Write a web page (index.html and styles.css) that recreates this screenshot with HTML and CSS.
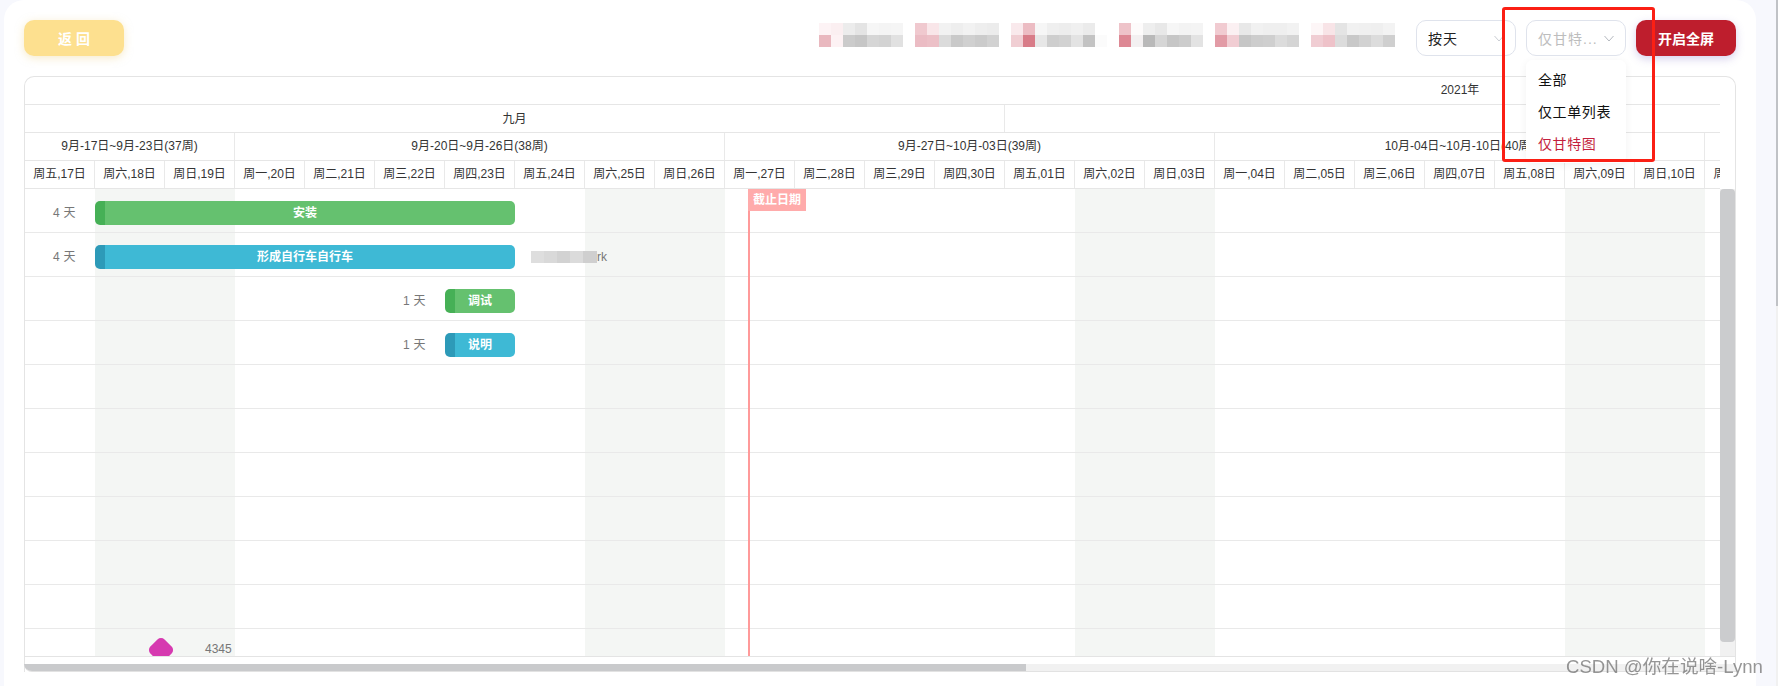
FILE: index.html
```html
<!DOCTYPE html>
<html lang="zh-CN">
<head>
<meta charset="utf-8">
<title>甘特图</title>
<link rel="stylesheet" href="styles.css">
</head>
<body>
<main class="card">
  <header class="toolbar">
    <button class="btn btn-back">返 回</button>
    <svg class="mosaic" width="576" height="24" viewBox="0 0 48 2" preserveAspectRatio="none" shape-rendering="crispEdges" aria-hidden="true">
      <g>
        <rect x="0" y="0" width="1" height="1" fill="#fdf3f5"/><rect x="1" y="0" width="1" height="1" fill="#fbeff1"/><rect x="2" y="0" width="1" height="1" fill="#ececec"/><rect x="3" y="0" width="1" height="1" fill="#e4e4e4"/><rect x="4" y="0" width="1" height="1" fill="#f6f6f6"/><rect x="5" y="0" width="1" height="1" fill="#f4f4f4"/><rect x="6" y="0" width="1" height="1" fill="#f5f5f5"/>
        <rect x="0" y="1" width="1" height="1" fill="#e9b8bf"/><rect x="1" y="1" width="1" height="1" fill="#fdf2f4"/><rect x="2" y="1" width="1" height="1" fill="#cbcbcb"/><rect x="3" y="1" width="1" height="1" fill="#c6c6c6"/><rect x="4" y="1" width="1" height="1" fill="#d6d6d6"/><rect x="5" y="1" width="1" height="1" fill="#d3d3d3"/><rect x="6" y="1" width="1" height="1" fill="#e1e1e1"/>
      </g>
      <g>
        <rect x="8" y="0" width="1" height="1" fill="#f0c9cf"/><rect x="9" y="0" width="1" height="1" fill="#f9e6e9"/><rect x="10" y="0" width="1" height="1" fill="#f2f2f2"/><rect x="11" y="0" width="1" height="1" fill="#eeeeee"/><rect x="12" y="0" width="1" height="1" fill="#f2f2f2"/><rect x="13" y="0" width="1" height="1" fill="#eeeeee"/><rect x="14" y="0" width="1" height="1" fill="#ececec"/>
        <rect x="8" y="1" width="1" height="1" fill="#ebbcc4"/><rect x="9" y="1" width="1" height="1" fill="#ecc0c7"/><rect x="10" y="1" width="1" height="1" fill="#dbdbdb"/><rect x="11" y="1" width="1" height="1" fill="#c9c9c9"/><rect x="12" y="1" width="1" height="1" fill="#d0d0d0"/><rect x="13" y="1" width="1" height="1" fill="#cbcbcb"/><rect x="14" y="1" width="1" height="1" fill="#d2d2d2"/>
      </g>
      <g>
        <rect x="16" y="0" width="1" height="1" fill="#f9e9ec"/><rect x="17" y="0" width="1" height="1" fill="#ecbcc3"/><rect x="18" y="0" width="1" height="1" fill="#f6f6f6"/><rect x="19" y="0" width="1" height="1" fill="#efefef"/><rect x="20" y="0" width="1" height="1" fill="#ededed"/><rect x="21" y="0" width="1" height="1" fill="#f0f0f0"/><rect x="22" y="0" width="1" height="1" fill="#ebebeb"/>
        <rect x="16" y="1" width="1" height="1" fill="#f0ced3"/><rect x="17" y="1" width="1" height="1" fill="#d87c88"/><rect x="18" y="1" width="1" height="1" fill="#e7e7e7"/><rect x="19" y="1" width="1" height="1" fill="#cecece"/><rect x="20" y="1" width="1" height="1" fill="#d2d2d2"/><rect x="21" y="1" width="1" height="1" fill="#e3e3e3"/><rect x="22" y="1" width="1" height="1" fill="#c3c3c3"/><rect x="23" y="1" width="1" height="1" fill="#fbfbfb"/>
      </g>
      <g>
        <rect x="25" y="0" width="1" height="1" fill="#eec3c9"/><rect x="26" y="0" width="1" height="1" fill="#fdfbfb"/><rect x="27" y="0" width="1" height="1" fill="#eeeeee"/><rect x="28" y="0" width="1" height="1" fill="#e8e8e8"/><rect x="29" y="0" width="1" height="1" fill="#f6f6f6"/><rect x="30" y="0" width="1" height="1" fill="#f3f3f3"/><rect x="31" y="0" width="1" height="1" fill="#f4f4f4"/>
        <rect x="25" y="1" width="1" height="1" fill="#dd8894"/><rect x="26" y="1" width="1" height="1" fill="#f3f0f1"/><rect x="27" y="1" width="1" height="1" fill="#b9b9b9"/><rect x="28" y="1" width="1" height="1" fill="#d6d6d6"/><rect x="29" y="1" width="1" height="1" fill="#c6c6c6"/><rect x="30" y="1" width="1" height="1" fill="#cccccc"/><rect x="31" y="1" width="1" height="1" fill="#e3e3e3"/>
      </g>
      <g>
        <rect x="33" y="0" width="1" height="1" fill="#f1cbd1"/><rect x="34" y="0" width="1" height="1" fill="#fbf0f2"/><rect x="35" y="0" width="1" height="1" fill="#e8e8e8"/><rect x="36" y="0" width="1" height="1" fill="#f1f1f1"/><rect x="37" y="0" width="1" height="1" fill="#efefef"/><rect x="38" y="0" width="1" height="1" fill="#efefef"/><rect x="39" y="0" width="1" height="1" fill="#f2f2f2"/>
        <rect x="33" y="1" width="1" height="1" fill="#e29ba6"/><rect x="34" y="1" width="1" height="1" fill="#f1cdd3"/><rect x="35" y="1" width="1" height="1" fill="#c6c6c6"/><rect x="36" y="1" width="1" height="1" fill="#cdcdcd"/><rect x="37" y="1" width="1" height="1" fill="#cfcfcf"/><rect x="38" y="1" width="1" height="1" fill="#dcdcdc"/><rect x="39" y="1" width="1" height="1" fill="#d5d5d5"/>
      </g>
      <g>
        <rect x="41" y="0" width="1" height="1" fill="#fdf6f7"/><rect x="42" y="0" width="1" height="1" fill="#f8e4e7"/><rect x="43" y="0" width="1" height="1" fill="#e4e4e4"/><rect x="44" y="0" width="1" height="1" fill="#f1f1f1"/><rect x="45" y="0" width="1" height="1" fill="#f0f0f0"/><rect x="46" y="0" width="1" height="1" fill="#efefef"/><rect x="47" y="0" width="1" height="1" fill="#f3f3f3"/>
        <rect x="41" y="1" width="1" height="1" fill="#f0cdd3"/><rect x="42" y="1" width="1" height="1" fill="#eec2c9"/><rect x="43" y="1" width="1" height="1" fill="#dcdcdc"/><rect x="44" y="1" width="1" height="1" fill="#c8c8c8"/><rect x="45" y="1" width="1" height="1" fill="#d2d2d2"/><rect x="46" y="1" width="1" height="1" fill="#dcdcdc"/><rect x="47" y="1" width="1" height="1" fill="#cfcfcf"/>
      </g>
    </svg>
    <div class="selects">
      <div class="select">
        <span class="select-value">按天</span>
        <svg class="chevron chevron-faint" width="10" height="7" viewBox="0 0 10 7" aria-hidden="true"><path d="M.5 1 5 6 9.500 1" fill="none" stroke="currentColor" stroke-width="1"/></svg>
      </div>
      <div class="select select-open">
        <span class="select-value select-placeholder">仅甘特...</span>
        <svg class="chevron" width="10" height="7" viewBox="0 0 10 7" aria-hidden="true"><path d="M.5 1 5 6 9.500 1" fill="none" stroke="currentColor" stroke-width="1"/></svg>
        <ul class="dropdown">
          <li>全部</li>
          <li>仅工单列表</li>
          <li class="active">仅甘特图</li>
        </ul>
      </div>
      <button class="btn btn-full">开启全屏</button>
    </div>
  </header>

  <section class="gantt">
    <div class="gantt-main">
      <div class="viewport">
        <div class="timeline">
          <div class="hrow"><div class="cell c41">2021年</div></div>
          <div class="hrow"><div class="cell c14 month">九月</div><div class="cell c27"></div></div>
          <div class="hrow">
            <div class="cell c3">9月-17日~9月-23日(37周)</div>
            <div class="cell c7">9月-20日~9月-26日(38周)</div>
            <div class="cell c7">9月-27日~10月-03日(39周)</div>
            <div class="cell c7">10月-04日~10月-10日(40周)</div>
            <div class="cell c7">10月-11日~10月-17日(41周)</div>
          </div>
          <div class="hrow">
            <div class="cell c1">周五,17日</div><div class="cell c1">周六,18日</div><div class="cell c1">周日,19日</div>
            <div class="cell c1">周一,20日</div><div class="cell c1">周二,21日</div><div class="cell c1">周三,22日</div><div class="cell c1">周四,23日</div><div class="cell c1">周五,24日</div><div class="cell c1">周六,25日</div><div class="cell c1">周日,26日</div>
            <div class="cell c1">周一,27日</div><div class="cell c1">周二,28日</div><div class="cell c1">周三,29日</div><div class="cell c1">周四,30日</div><div class="cell c1">周五,01日</div><div class="cell c1">周六,02日</div><div class="cell c1">周日,03日</div>
            <div class="cell c1">周一,04日</div><div class="cell c1">周二,05日</div><div class="cell c1">周三,06日</div><div class="cell c1">周四,07日</div><div class="cell c1">周五,08日</div><div class="cell c1">周六,09日</div><div class="cell c1">周日,10日</div>
            <div class="cell c1">周一,11日</div>
          </div>
          <div class="body">
            <div class="row">
              <span class="days" style="left:28px">4 天</span>
              <div class="bar bar-green" style="left:70px;width:420px"><span>安装</span></div>
            </div>
            <div class="row">
              <span class="days" style="left:28px">4 天</span>
              <div class="bar bar-blue" style="left:70px;width:420px"><span>形成自行车自行车</span></div>
              <div class="owner"><i class="blur b1"></i><i class="blur b2"></i><i class="blur b3"></i><i class="blur b4"></i><i class="blur b5"></i><span>rk</span></div>
            </div>
            <div class="row">
              <span class="days" style="left:378px">1 天</span>
              <div class="bar bar-green" style="left:420px;width:70px"><span>调试</span></div>
            </div>
            <div class="row">
              <span class="days" style="left:378px">1 天</span>
              <div class="bar bar-blue" style="left:420px;width:70px"><span>说明</span></div>
            </div>
            <div class="row"></div>
            <div class="row"></div>
            <div class="row"></div>
            <div class="row"></div>
            <div class="row"></div>
            <div class="row"></div>
            <div class="row">
              <i class="milestone"></i>
              <span class="milestone-label">4345</span>
            </div>
            <div class="deadline"><span class="deadline-label">截止日期</span></div>
          </div>
        </div>
      </div>
      <div class="vbar"><div class="vtrack"><div class="vthumb"></div></div></div>
    </div>
    <div class="hbar"><div class="hthumb"></div></div>
  </section>

  <div class="annotation"></div>
</main>
<div class="page-scroll"><div class="page-thumb"></div></div>
<span class="watermark">CSDN @你在说啥-Lynn</span>
</body>
</html>
```
FILE: styles.css
```css
* { box-sizing: border-box; }
html, body { height: 100%; }
body {
  margin: 0;
  height: 686px;
  overflow: hidden;
  display: flex;
  background: #f7f8fd;
  font-family: "Liberation Sans", "Noto Sans CJK SC", sans-serif;
  font-size: 12px;
  color: #333;
}
.card {
  position: relative;
  width: 1752px;
  margin-left: 4px;
  margin-right: 20px;
  padding: 20px 20px 0;
  background: #fff;
  border-radius: 20px 20px 0 0;
  flex: none;
}
.toolbar {
  display: flex;
  align-items: flex-start;
  height: 36px;
  margin-bottom: 20px;
}
.btn {
  height: 36px;
  width: 100px;
  border: 0;
  border-radius: 10px;
  color: #fff;
  font-family: inherit;
  padding: 0;
}
.btn-back {
  background: #fde08f;
  font-size: 14px;
  font-weight: 700;
  box-shadow: 0 2px 8px rgba(240, 215, 150, .5);
}
.btn-full {
  background: #be1e2d;
  font-size: 14px;
  font-weight: 700;
  box-shadow: 0 3px 8px rgba(110, 90, 190, .28);
}
.mosaic { margin-left: 695px; margin-top: 3px; flex: none; }
.selects { display: flex; gap: 10px; margin-left: auto; }
.select {
  position: relative;
  width: 100px;
  height: 36px;
  border: 1px solid #dfe3ec;
  border-radius: 10px;
  display: flex;
  align-items: center;
  justify-content: space-between;
  padding: 0 11px 0 11px;
  font-size: 14px;
  letter-spacing: 1px;
  color: #222;
}
.select-placeholder { color: #bdbdbd; }
.chevron { color: #b4b8bf; flex: none; }
.chevron-faint { color: #c9ccd2; }
.dropdown {
  position: absolute;
  z-index: 5;
  left: -1px;
  top: 39px;
  width: 100px;
  height: 103px;
  margin: 0;
  padding: 4px 0 0;
  list-style: none;
  background: #fff;
  border-radius: 6px;
  box-shadow: 0 2px 8px rgba(0, 0, 0, .06);
  letter-spacing: .6px;
}
.dropdown li {
  height: 32px;
  line-height: 32px;
  padding-left: 12px;
  color: #111;
  white-space: nowrap;
}
.dropdown .active { color: #c41f3e; }

.gantt {
  height: 596px;
  border-left: 1px solid #e4e4e4;
  border-top: 1px solid #e4e4e4;
  border-right: 1px solid #e4e4e4;
  border-radius: 10px 10px 0 0;
  position: relative;
}
.gantt-main {
  display: flex;
  height: 580px;
  border-bottom: 1px solid #e4e4e4;
  margin-bottom: 7px;
}
.viewport {
  width: 1695px;
  height: 579px;
  overflow: hidden;
  border-top-left-radius: 10px;
  flex: none;
}
.timeline { width: 2870px; }
.hrow {
  display: flex;
  height: 28px;
  border-bottom: 1px solid #e6e6e6;
}
.cell {
  flex: none;
  height: 27px;
  line-height: 27px;
  text-align: center;
  border-right: 1px solid #e9e9e9;
  color: #333;
  font-size: 12px;
  white-space: nowrap;
  overflow: hidden;
}
.month { line-height: 29px; }
.c1 { width: 70px; }
.c3 { width: 210px; }
.c7 { width: 490px; }
.c14 { width: 980px; }
.c27 { width: 1890px; }
.c41 { width: 2870px; border-right: 0; }

.body {
  position: relative;
  background: linear-gradient(to right, transparent 70px, #f4f6f4 70px, #f4f6f4 210px, transparent 210px) 0 0 / 490px 100% repeat-x;
}
.row {
  position: relative;
  height: 44px;
  border-bottom: 1px solid #e9e9e9;
}
.days {
  position: absolute;
  top: 12px;
  line-height: 24px;
  color: #777;
  font-size: 12px;
  letter-spacing: .3px;
  white-space: pre;
}
.bar {
  position: absolute;
  top: 12px;
  height: 24px;
  border-radius: 5px;
  overflow: hidden;
  color: #fff;
  font-size: 12px;
  font-weight: 700;
  line-height: 24px;
  text-align: center;
  padding-left: 0;
}
.bar-green { background: linear-gradient(to right, #46b056 10px, #65c16f 10px); }
.bar-blue { background: linear-gradient(to right, #2d9ab8 10px, #3eb9d5 10px); }
.owner {
  position: absolute;
  left: 506px;
  top: 18px;
  height: 12px;
  display: flex;
  align-items: center;
  color: #777;
}
.blur { width: 13px; height: 12px; flex: none; }
.b1 { background: #dedede; }
.b2 { background: #d9d9d9; }
.b3 { background: #d2d2d2; }
.b4 { background: #dbdbdb; }
.b5 { background: #cfcfcf; width: 14px; }
.owner span { font-size: 12px; }
.milestone {
  position: absolute;
  left: 126px;
  top: 11px;
  width: 20px;
  height: 20px;
  background: #d63ab0;
  border-radius: 5px;
  transform: rotate(45deg);
}
.milestone-label {
  position: absolute;
  left: 180px;
  top: 12px;
  color: #777;
  line-height: 16px;
}
.deadline {
  position: absolute;
  left: 723px;
  top: 0;
  bottom: 0;
  width: 2px;
  background: #ff9a9a;
}
.deadline-label {
  position: absolute;
  left: 0;
  top: 0;
  width: 58px;
  height: 22px;
  line-height: 22px;
  text-align: center;
  background: #ffabab;
  color: #fff;
  font-weight: 700;
  font-size: 12px;
  white-space: nowrap;
}
.vbar {
  width: 15px;
  flex: none;
  padding-top: 112px;
}
.vtrack {
  height: 467px;
  background: #f1f1f1;
}
.vthumb {
  height: 453px;
  background: #cbccce;
  border-radius: 4px;
}
.hbar {
  height: 8px;
  background: #f1f1f1;
  border-radius: 0 0 0 10px;
  margin: 0 -1px 0 -1px;
  position: relative;
  overflow: hidden;
  border-bottom: 1px solid #e2e2e2;
}
.hthumb {
  width: 1002px;
  height: 8px;
  background: #c9cacc;
}
.annotation {
  position: absolute;
  z-index: 6;
  left: 1498px;
  top: 7px;
  width: 153px;
  height: 155px;
  border: 3px solid #fb1f14;
  border-radius: 3px;
  pointer-events: none;
}
.page-scroll {
  position: fixed;
  right: 0;
  top: 0;
  width: 2px;
  height: 686px;
  background: #f1f1f1;
}
.page-thumb { height: 306px; background: #c0c2c6; }
.watermark {
  position: fixed;
  left: 1566px;
  top: 655px;
  font-size: 18.6px;
  line-height: 24px;
  color: rgba(100, 100, 100, .68);
  white-space: nowrap;
}
```
